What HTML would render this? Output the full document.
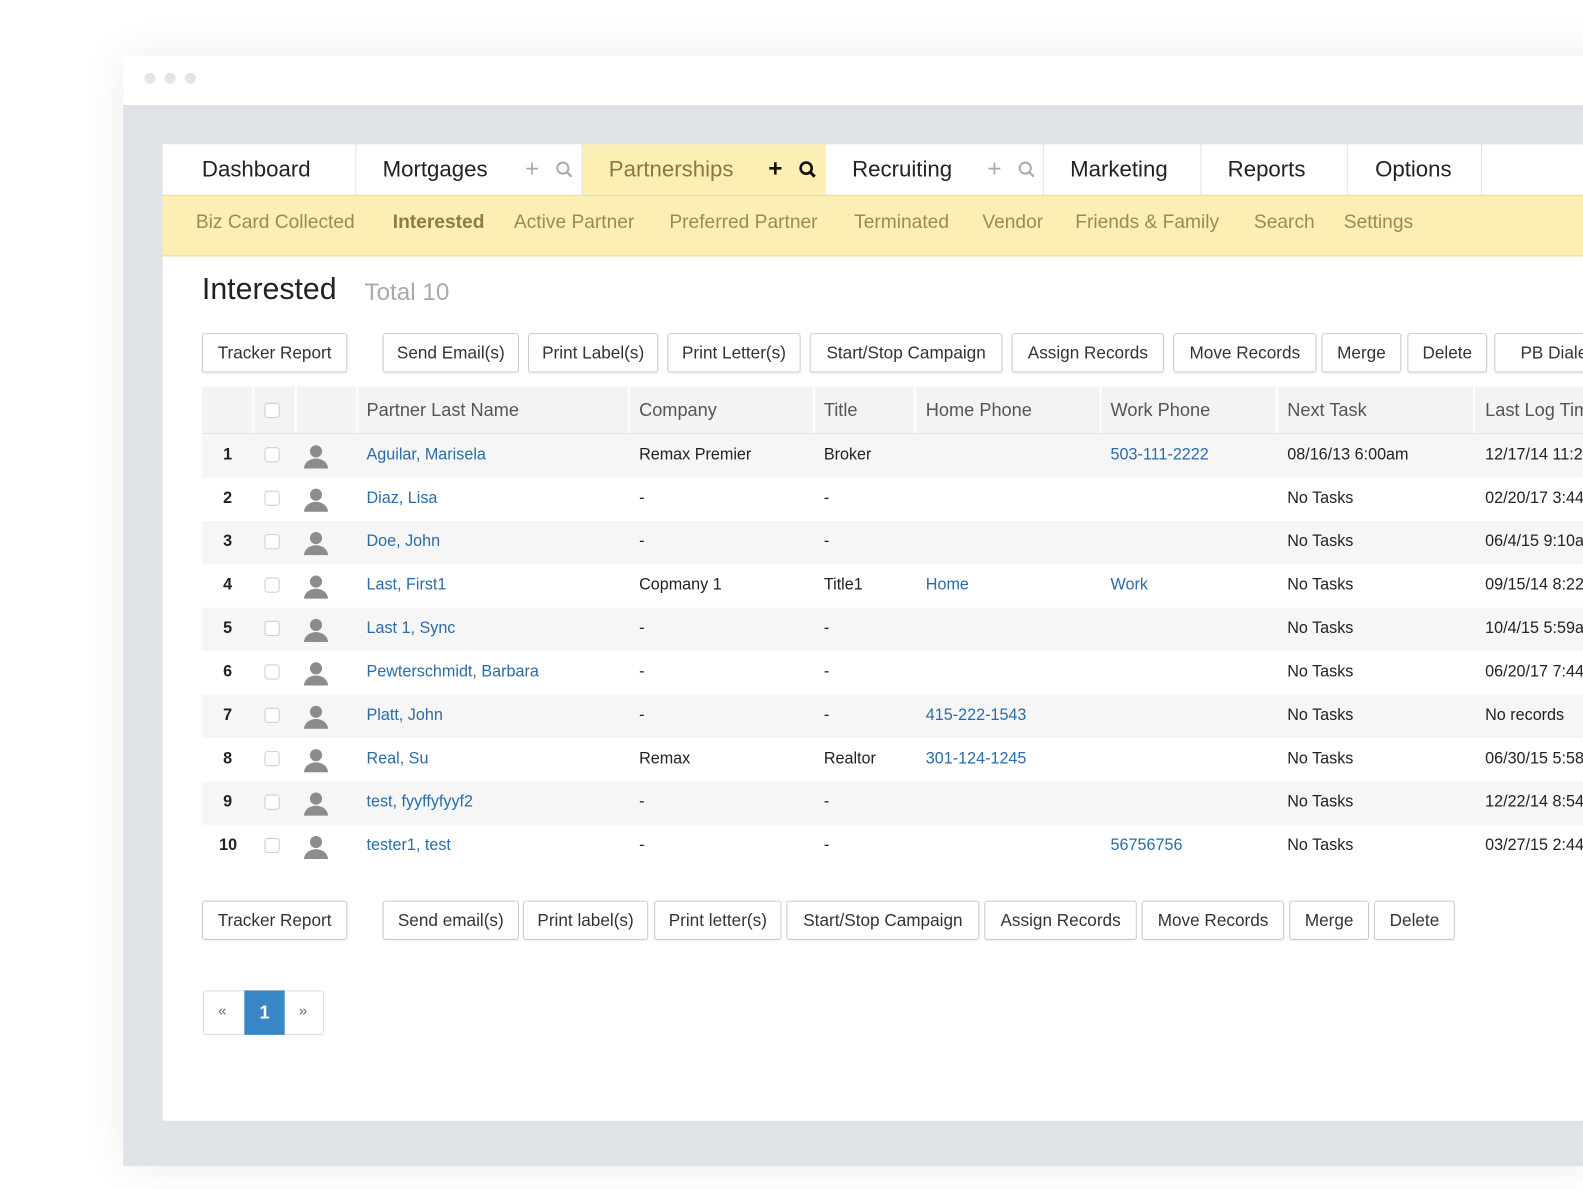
<!DOCTYPE html>
<html><head><meta charset="utf-8"><style>
*{box-sizing:border-box;margin:0;padding:0}
body{width:1583px;height:1178px;background:#fff;font-family:"Liberation Sans",sans-serif;position:relative;overflow:hidden;color:#222}
#wrap{position:absolute;left:0;top:0;width:1583px;height:1178px;transform:scale(1.0096);transform-origin:0 0}
.win{position:absolute;left:122px;top:55px;width:1470px;height:1100px;box-shadow:0 0 40px rgba(0,0,0,.08);background:#dfe3e8}
.top{position:absolute;left:0;top:0;right:0;height:49px;background:#fff}
.dot{position:absolute;top:17px;width:11px;height:11px;border-radius:50%;background:#e4e4e4}
.panel{position:absolute;left:161px;top:143px;width:1430px;height:967px;background:#fff}
.a{position:absolute;white-space:nowrap}
.tab{position:absolute;top:143px;height:50px;background:#fff;border-right:1px solid #e2e2e2;font-size:22px;line-height:50px;color:#222}
.sub{position:absolute;left:161px;top:193px;width:1430px;height:61px;background:#fcefb4;border-top:1px solid #ead9a0;border-bottom:1px solid #ead9a0}
.sub span{position:absolute;top:16px;font-size:19px;color:#9a8a5a}
.btn{position:absolute;height:39px;border:1px solid #ccc;border-radius:3px;background:#fff;font-size:17px;line-height:37px;text-align:center;color:#333;box-shadow:0 1px 1px rgba(0,0,0,.05)}
.row{position:absolute;left:200px;width:1391px;height:43px;font-size:16px}
.row.alt{background:#f6f6f6}
.row span{position:absolute;top:12px;white-space:nowrap}
.l{color:#2b6ca8}
.cb{position:absolute;left:62px;top:13px;width:15px;height:15px;border:1px solid #ccc;border-radius:3px;background:#fff}
.pi{position:absolute;left:100px;top:10px}
.hd{position:absolute;left:200px;top:383px;width:1391px;height:48px;background:#f3f3f3;border-bottom:2px solid #e2e2e2;font-size:18px;color:#555}
.hd span{position:absolute;top:13px}
.vl{position:absolute;top:0;width:2px;height:100%;background:#fff}
</style></head><body><div id="wrap">
<div class="win"><div class="top"><div class="dot" style="left:21px"></div><div class="dot" style="left:41px"></div><div class="dot" style="left:61px"></div></div></div>
<div class="panel"></div>
<div class="tab" style="left:161px;width:192px;padding-left:39px">Dashboard</div>
<div class="tab" style="left:353px;width:224px;padding-left:26px">Mortgages<span style="position:absolute;left:167px;color:#aaa;font-size:24px">+</span><svg style="position:absolute;left:197px;top:16px" width="18" height="18" viewBox="0 0 18 18"><circle cx="7.5" cy="7.5" r="5.5" fill="none" stroke="#aaa" stroke-width="2"/><path d="M11.5 11.5L16 16" stroke="#aaa" stroke-width="2.2"/></svg></div>
<div class="tab" style="left:577px;width:241px;padding-left:26px;background:#fcefb4;color:#8a7840;border:none">Partnerships<span style="position:absolute;left:184px;color:#111;font-size:24px;font-weight:bold">+</span><svg style="position:absolute;left:214px;top:16px" width="18" height="18" viewBox="0 0 18 18"><circle cx="7.5" cy="7.5" r="5.5" fill="none" stroke="#111" stroke-width="2.6"/><path d="M11.5 11.5L16 16" stroke="#111" stroke-width="3"/></svg></div>
<div class="tab" style="left:818px;width:216px;padding-left:26px">Recruiting<span style="position:absolute;left:160px;color:#aaa;font-size:24px">+</span><svg style="position:absolute;left:190px;top:16px" width="18" height="18" viewBox="0 0 18 18"><circle cx="7.5" cy="7.5" r="5.5" fill="none" stroke="#aaa" stroke-width="2"/><path d="M11.5 11.5L16 16" stroke="#aaa" stroke-width="2.2"/></svg></div>
<div class="tab" style="left:1034px;width:156px;padding-left:26px">Marketing</div>
<div class="tab" style="left:1190px;width:145px;padding-left:26px">Reports</div>
<div class="tab" style="left:1335px;width:133px;padding-left:27px">Options</div>
<div class="sub">
<span style="left:33px">Biz Card Collected</span><span style="left:228px;font-weight:bold;color:#8d7c48">Interested</span><span style="left:348px">Active Partner</span><span style="left:502px">Preferred Partner</span><span style="left:685px">Terminated</span><span style="left:812px">Vendor</span><span style="left:904px">Friends &amp; Family</span><span style="left:1081px">Search</span><span style="left:1170px">Settings</span></div>
<div class="a" style="left:200px;top:270px;font-size:30px;color:#222">Interested</div>
<div class="a" style="left:361px;top:276px;font-size:24px;color:#aaa">Total 10</div>
<div class="btn" style="left:200px;top:330px;width:144px">Tracker Report</div>
<div class="btn" style="left:379px;top:330px;width:135px">Send Email(s)</div>
<div class="btn" style="left:523px;top:330px;width:129px">Print Label(s)</div>
<div class="btn" style="left:661px;top:330px;width:132px">Print Letter(s)</div>
<div class="btn" style="left:802px;top:330px;width:191px">Start/Stop Campaign</div>
<div class="btn" style="left:1002px;top:330px;width:151px">Assign Records</div>
<div class="btn" style="left:1162px;top:330px;width:142px">Move Records</div>
<div class="btn" style="left:1309px;top:330px;width:79px">Merge</div>
<div class="btn" style="left:1394px;top:330px;width:79px">Delete</div>
<div class="btn" style="left:1480px;top:330px;width:130px;text-align:left;padding-left:25px">PB Dialer</div>
<div class="hd"><div class="vl" style="left:50px"></div><div class="vl" style="left:92px"></div><div class="vl" style="left:153px"></div><div class="vl" style="left:422px"></div><div class="vl" style="left:605px"></div><div class="vl" style="left:705px"></div><div class="vl" style="left:889px"></div><div class="vl" style="left:1064px"></div><div class="vl" style="left:1259px"></div>
<div class="cb" style="top:16px"></div>
<span style="left:163px">Partner Last Name</span><span style="left:433px">Company</span><span style="left:616px">Title</span><span style="left:717px">Home Phone</span><span style="left:900px">Work Phone</span><span style="left:1075px">Next Task</span><span style="left:1271px">Last Log Time</span></div>
<div id="rows"></div>
<div class="btn" style="left:200px;top:892px;width:144px">Tracker Report</div>
<div class="btn" style="left:379px;top:892px;width:135px">Send email(s)</div>
<div class="btn" style="left:518px;top:892px;width:124px">Print label(s)</div>
<div class="btn" style="left:648px;top:892px;width:126px">Print letter(s)</div>
<div class="btn" style="left:779px;top:892px;width:191px">Start/Stop Campaign</div>
<div class="btn" style="left:975px;top:892px;width:151px">Assign Records</div>
<div class="btn" style="left:1131px;top:892px;width:141px">Move Records</div>
<div class="btn" style="left:1277px;top:892px;width:79px">Merge</div>
<div class="btn" style="left:1361px;top:892px;width:80px">Delete</div>
<div class="a" style="left:201px;top:981px;width:120px;height:44px;border:1px solid #ddd;border-radius:3px"></div>
<div class="a" style="left:216px;top:993px;font-size:15px;color:#666">«</div>
<div class="a" style="left:242px;top:981px;width:40px;height:44px;background:#3a87c8;color:#fff;font-size:18px;text-align:center;line-height:44px;font-weight:bold">1</div>
<div class="a" style="left:296px;top:993px;font-size:15px;color:#666">»</div>
</div>
<script>
var d=[["1","Aguilar, Marisela","Remax Premier","Broker","","503-111-2222","08/16/13 6:00am","12/17/14 11:25am"],["2","Diaz, Lisa","-","-","","","No Tasks","02/20/17 3:44pm"],["3","Doe, John","-","-","","","No Tasks","06/4/15 9:10am"],["4","Last, First1","Copmany 1","Title1","Home","Work","No Tasks","09/15/14 8:22pm"],["5","Last 1, Sync","-","-","","","No Tasks","10/4/15 5:59am"],["6","Pewterschmidt, Barbara","-","-","","","No Tasks","06/20/17 7:44pm"],["7","Platt, John","-","-","415-222-1543","","No Tasks","No records"],["8","Real, Su","Remax","Realtor","301-124-1245","","No Tasks","06/30/15 5:58pm"],["9","test, fyyffyfyyf2","-","-","","","No Tasks","12/22/14 8:54pm"],["10","tester1, test","-","-","","56756756","No Tasks","03/27/15 2:44pm"]];
var h="";var icon='<svg class="pi" width="26" height="24" viewBox="0 0 26 24"><circle cx="13" cy="7" r="6" fill="#8c8c8c"/><path d="M1 24 Q2 15 13 14 Q24 15 25 24Z" fill="#8c8c8c"/></svg>';
d.forEach(function(r,i){h+='<div class="row'+(i%2==0?' alt':'')+'" style="top:'+(430+i*43)+'px"><span style="left:'+(r[0].length>1?17:21)+'px;font-weight:bold">'+r[0]+'</span><div class="cb"></div>'+icon+'<span class="l" style="left:163px">'+r[1]+'</span><span style="left:433px">'+r[2]+'</span><span style="left:616px">'+r[3]+'</span><span class="l" style="left:717px">'+r[4]+'</span><span class="l" style="left:900px">'+r[5]+'</span><span style="left:1075px">'+r[6]+'</span><span style="left:1271px">'+r[7]+'</span></div>'});
document.getElementById("rows").innerHTML=h;
</script>
</body></html>
